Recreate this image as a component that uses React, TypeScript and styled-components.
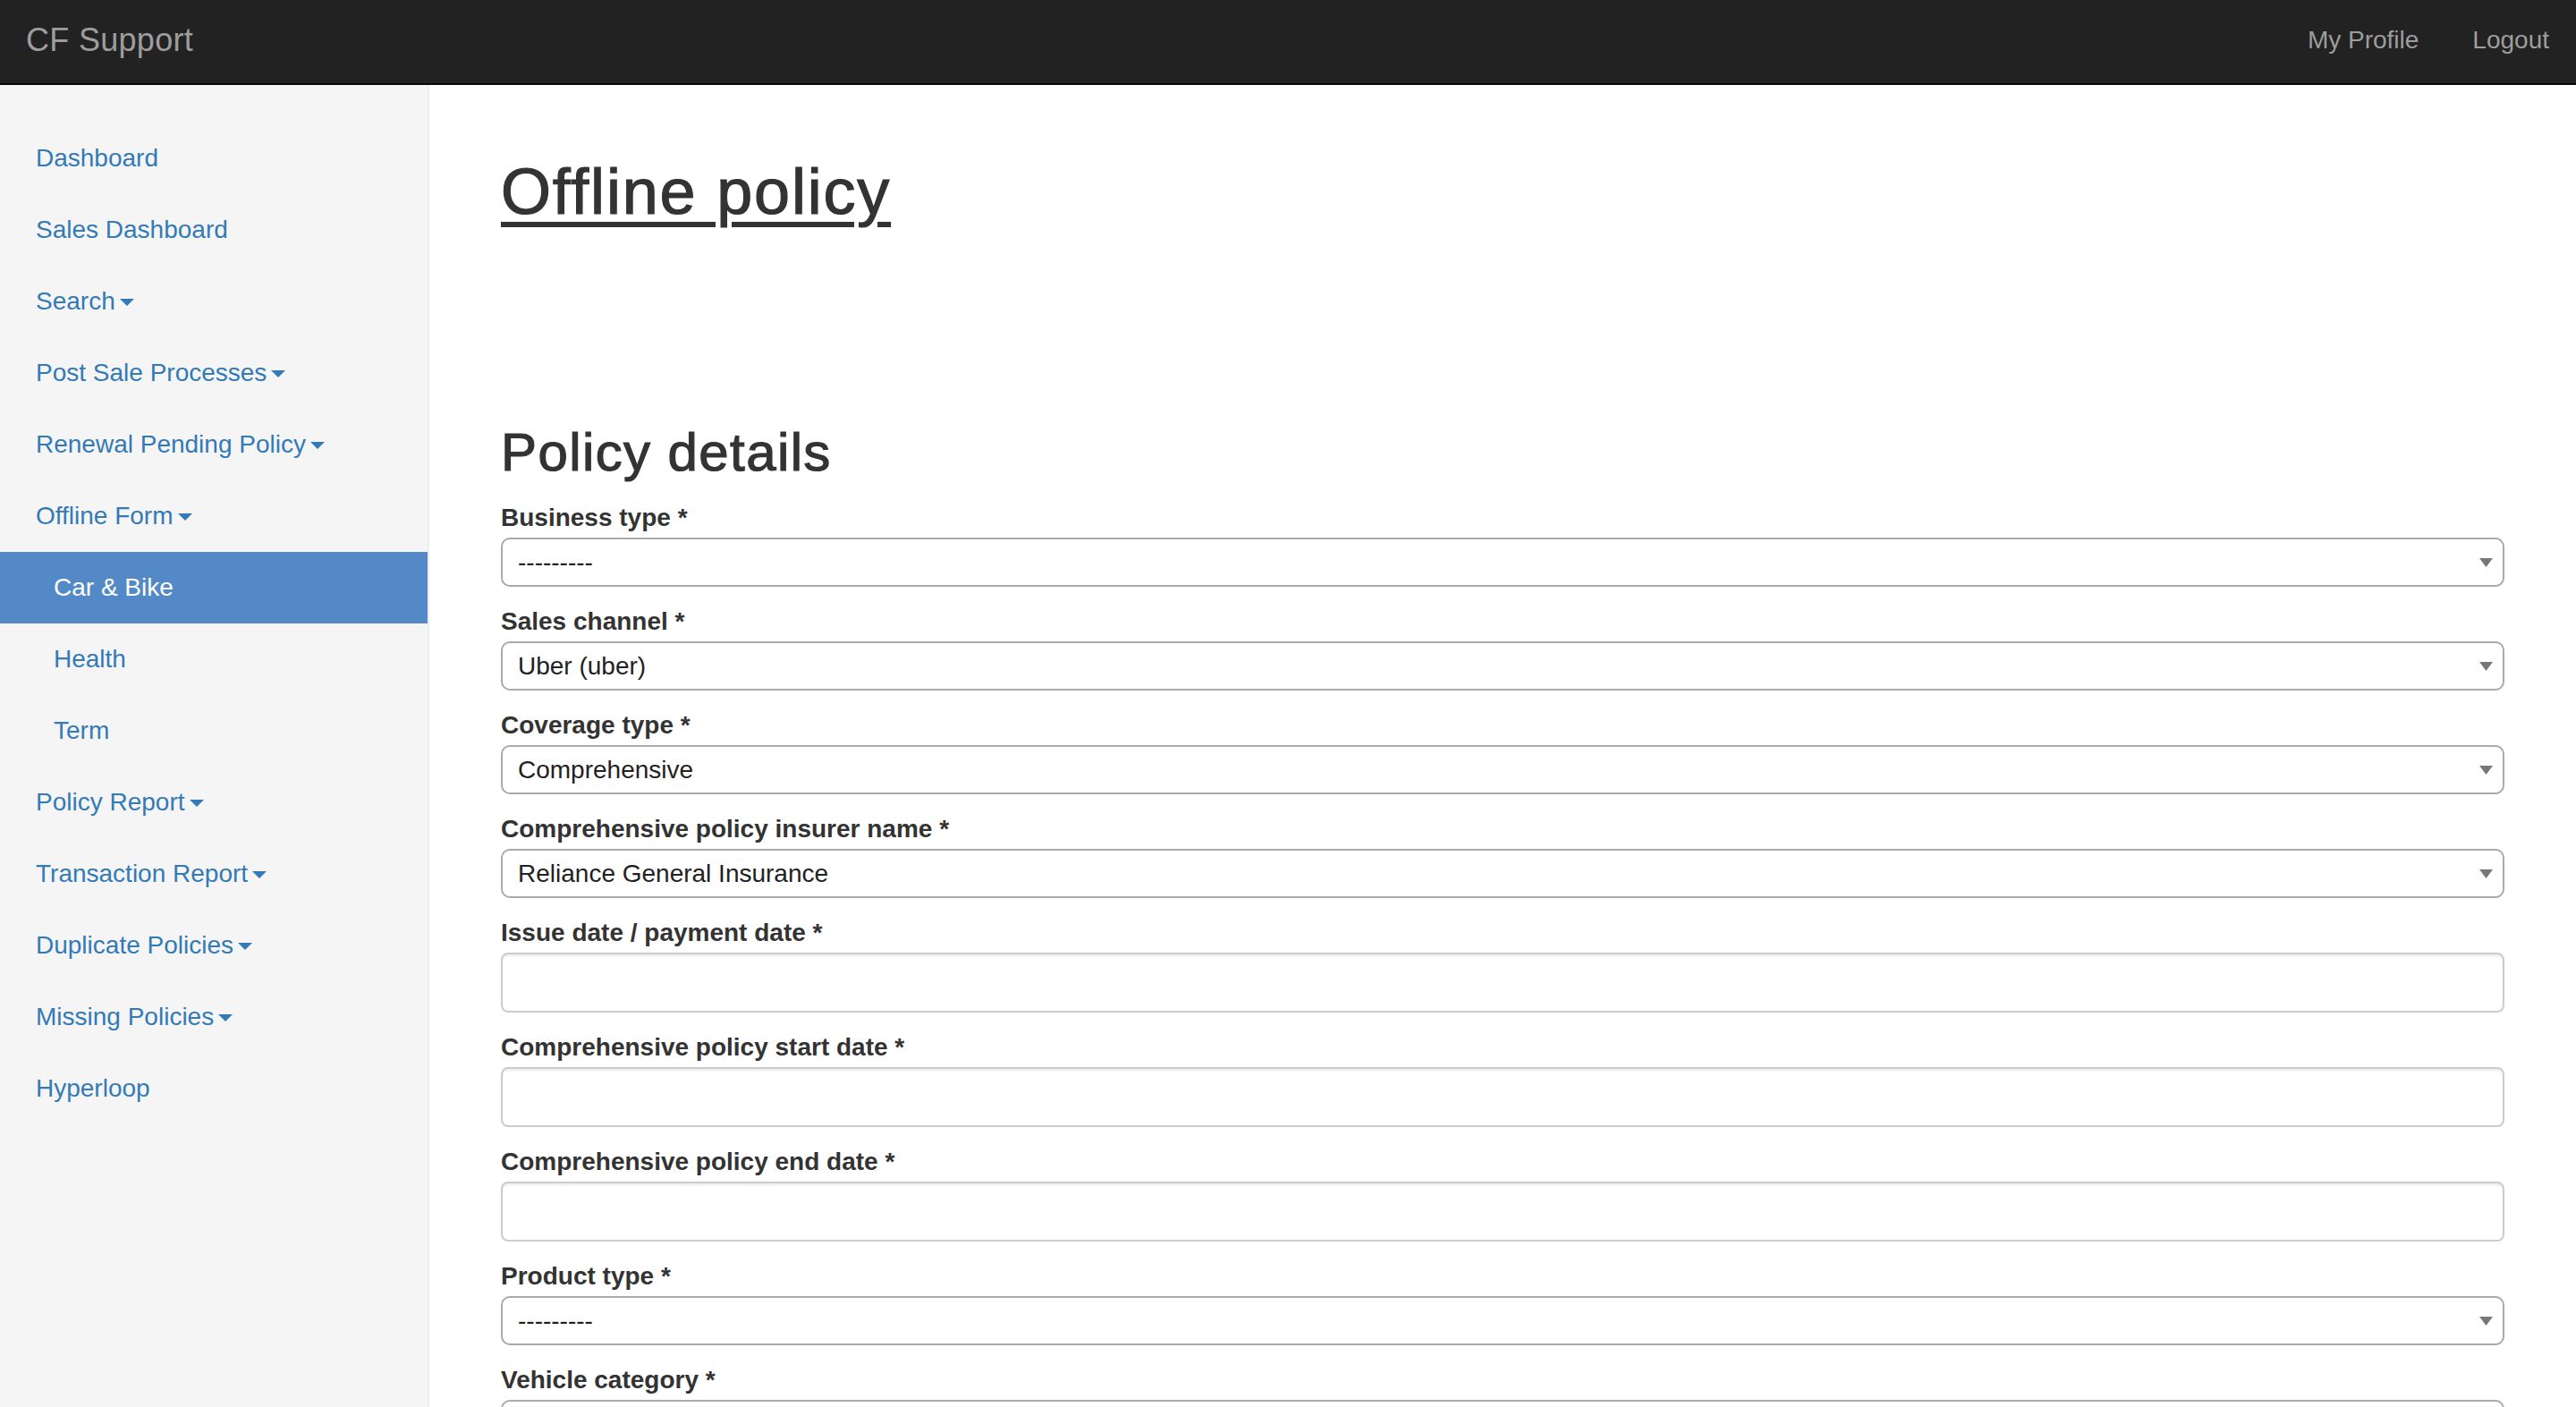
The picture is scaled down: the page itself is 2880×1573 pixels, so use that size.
import React from "react";
import styled, { createGlobalStyle } from "styled-components";

const GlobalStyle = createGlobalStyle`
  html, body {
    margin: 0;
    padding: 0;
  }
  body {
    font-family: "Liberation Sans", Arial, Helvetica, sans-serif;
    font-size: 28px;
    line-height: 40px;
    color: #333;
    background: #fff;
    overflow: hidden;
  }
  *, *::before, *::after {
    box-sizing: border-box;
  }
`;

const Page = styled.div`
  height: 100vh;
  display: flex;
  flex-direction: column;
  overflow: hidden;
`;

const Navbar = styled.header`
  flex: 0 0 95px;
  background: #222;
  border-bottom: 2px solid #080808;
  display: flex;
  align-items: center;
  justify-content: space-between;
  padding: 0 0 4px 29px;
`;

const Brand = styled.a`
  font-size: 36px;
  line-height: 40px;
  color: #9d9d9d;
  text-decoration: none;
  letter-spacing: 0.3px;
`;

const NavRight = styled.nav`
  display: flex;
  align-items: center;
`;

const TopLink = styled.a`
  font-size: 28px;
  line-height: 40px;
  padding: 0 30px;
  color: #9d9d9d;
  text-decoration: none;
`;

const Body = styled.div`
  flex: 1;
  min-height: 0;
  display: flex;
`;

const Sidebar = styled.aside`
  flex: 0 0 480px;
  background: #f5f5f5;
  border-right: 2px solid #eee;
  padding-top: 42px;
`;

const NavList = styled.ul`
  list-style: none;
  margin: 0;
  padding: 0;
`;

const NavItem = styled.li<{ $active?: boolean; $sub?: boolean }>`
  height: 80px;
  display: flex;
  align-items: center;
  padding-left: ${(p) => (p.$sub ? "60px" : "40px")};
  background: ${(p) => (p.$active ? "#5389c6" : "transparent")};
  color: ${(p) => (p.$active ? "#fff" : "#337ab7")};
  font-size: 28px;
  cursor: pointer;
`;

const Caret = styled.span`
  display: inline-block;
  width: 0;
  height: 0;
  margin-left: 5px;
  margin-top: 2px;
  border-top: 8px solid currentColor;
  border-left: 8px solid transparent;
  border-right: 8px solid transparent;
`;

const Main = styled.main`
  flex: 1;
  min-width: 0;
  padding: 40px 80px 0;
  overflow: hidden;
`;

const PageTitle = styled.h1`
  margin: 40px 0 219px;
  font-size: 72px;
  line-height: 79px;
  font-weight: 500;
  letter-spacing: 1.8px;
  -webkit-text-stroke: 1.2px #333;
  color: #333;
  text-decoration: underline;
  text-decoration-thickness: 6px;
  text-underline-offset: 9px;
`;

const SectionTitle = styled.h2`
  margin: 40px 0 20px;
  font-size: 60px;
  line-height: 66px;
  font-weight: 500;
  letter-spacing: 1.4px;
  -webkit-text-stroke: 1.2px #333;
  color: #333;
`;

const FormGroup = styled.div`
  margin-bottom: 19px;
`;

const Label = styled.label`
  display: block;
  font-weight: 700;
  font-size: 28px;
  line-height: 40px;
  margin-bottom: 2px;
  color: #333;
`;

const SelectWrap = styled.div`
  position: relative;
  height: 55px;
`;

const NativeSelect = styled.select`
  appearance: none;
  -webkit-appearance: none;
  width: 100%;
  height: 55px;
  border: 2px solid #aaa;
  border-radius: 10px;
  background: #fff;
  padding: 0 48px 0 17px;
  font-family: "Liberation Sans", Arial, Helvetica, sans-serif;
  font-size: 28px;
  color: #222;
  outline: none;
`;

const ArrowIcon = styled.svg`
  position: absolute;
  right: 13px;
  top: 50%;
  transform: translateY(-50%);
  pointer-events: none;
`;

const TextInput = styled.input`
  display: block;
  width: 100%;
  height: 67px;
  border: 2px solid #ccc;
  border-radius: 8px;
  background: #fff;
  padding: 12px 24px;
  font-family: "Liberation Sans", Arial, Helvetica, sans-serif;
  font-size: 28px;
  color: #555;
  box-shadow: inset 0 2px 2px rgba(0, 0, 0, 0.075);
  outline: none;
`;

type Field =
  | { kind: "select"; label: string; value: string; options: string[] }
  | { kind: "text"; label: string };

const fields: Field[] = [
  { kind: "select", label: "Business type *", value: "---------", options: ["---------", "New", "Renewal", "Rollover"] },
  { kind: "select", label: "Sales channel *", value: "Uber (uber)", options: ["---------", "Uber (uber)"] },
  { kind: "select", label: "Coverage type *", value: "Comprehensive", options: ["---------", "Comprehensive", "Third party"] },
  {
    kind: "select",
    label: "Comprehensive policy insurer name *",
    value: "Reliance General Insurance",
    options: ["---------", "Reliance General Insurance"],
  },
  { kind: "text", label: "Issue date / payment date *" },
  { kind: "text", label: "Comprehensive policy start date *" },
  { kind: "text", label: "Comprehensive policy end date *" },
  { kind: "select", label: "Product type *", value: "---------", options: ["---------", "Car", "Bike"] },
  { kind: "select", label: "Vehicle category *", value: "---------", options: ["---------"] },
];

const sideItems: { label: string; caret?: boolean; sub?: boolean; active?: boolean }[] = [
  { label: "Dashboard" },
  { label: "Sales Dashboard" },
  { label: "Search", caret: true },
  { label: "Post Sale Processes", caret: true },
  { label: "Renewal Pending Policy", caret: true },
  { label: "Offline Form", caret: true },
  { label: "Car & Bike", sub: true, active: true },
  { label: "Health", sub: true },
  { label: "Term", sub: true },
  { label: "Policy Report", caret: true },
  { label: "Transaction Report", caret: true },
  { label: "Duplicate Policies", caret: true },
  { label: "Missing Policies", caret: true },
  { label: "Hyperloop" },
];

function SelectField({ value, options }: { value: string; options: string[] }) {
  return (
    <SelectWrap>
      <NativeSelect defaultValue={value}>
        {options.map((o) => (
          <option key={o} value={o}>
            {o}
          </option>
        ))}
      </NativeSelect>
      <ArrowIcon width="15" height="10" viewBox="0 0 15 10">
        <polygon points="0,0 15,0 7.5,10" fill="#777" />
      </ArrowIcon>
    </SelectWrap>
  );
}

export default function App() {
  return (
    <>
      <GlobalStyle />
      <Page>
        <Navbar>
          <Brand href="#">CF Support</Brand>
          <NavRight>
            <TopLink href="#">My Profile</TopLink>
            <TopLink href="#">Logout</TopLink>
          </NavRight>
        </Navbar>
        <Body>
          <Sidebar>
            <NavList>
              {sideItems.map((it) => (
                <NavItem key={it.label} $active={it.active} $sub={it.sub}>
                  {it.label}
                  {it.caret && <Caret />}
                </NavItem>
              ))}
            </NavList>
          </Sidebar>
          <Main>
            <PageTitle>Offline policy</PageTitle>
            <SectionTitle>Policy details</SectionTitle>
            <form>
              {fields.map((f) => (
                <FormGroup key={f.label}>
                  <Label>{f.label}</Label>
                  {f.kind === "select" ? (
                    <SelectField value={f.value} options={f.options} />
                  ) : (
                    <TextInput type="text" />
                  )}
                </FormGroup>
              ))}
            </form>
          </Main>
        </Body>
      </Page>
    </>
  );
}
